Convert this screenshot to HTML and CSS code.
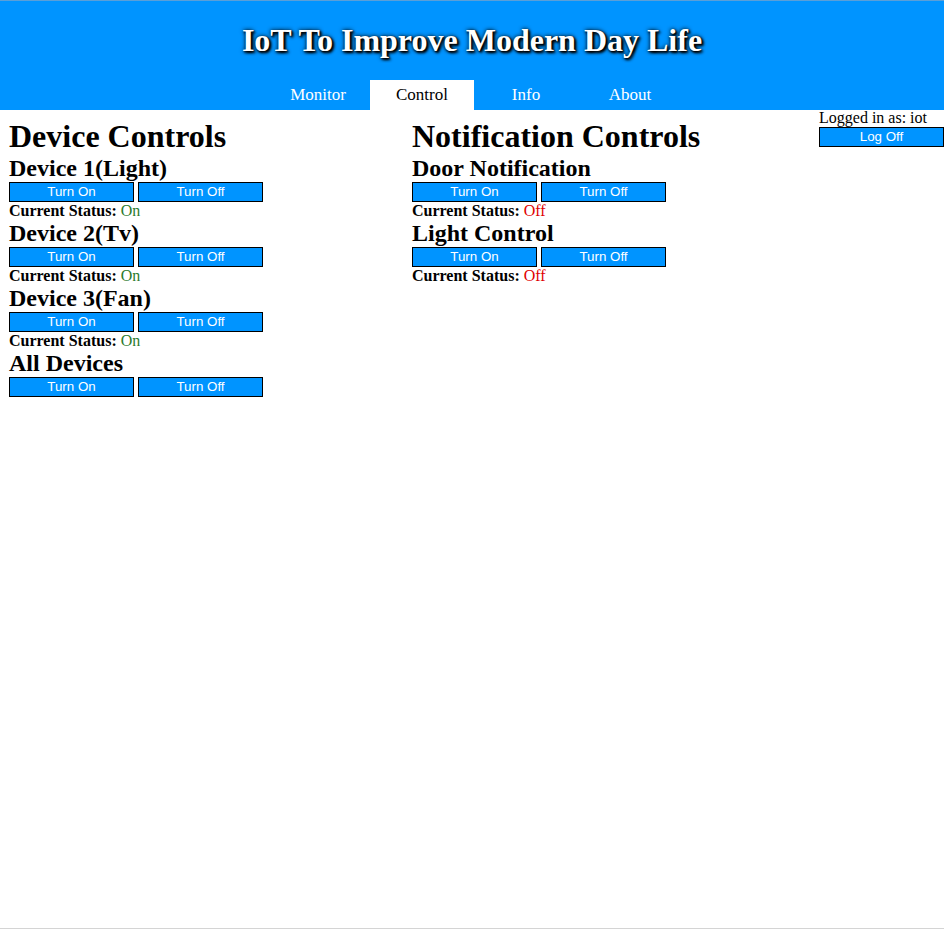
FILE: index.html
```html
<!DOCTYPE html>
<html>
<head>
<meta charset="utf-8">
<title>IoT Control</title>
<link rel="stylesheet" href="styles.css">
</head>
<body>
<header class="header">
  <h1 class="title">IoT To Improve Modern Day Life</h1>
  <nav class="nav">
    <a class="tab">Monitor</a>
    <a class="tab active">Control</a>
    <a class="tab">Info</a>
    <a class="tab">About</a>
  </nav>
</header>
<main class="main">
  <section class="col left">
    <h1 class="sec-title">Device Controls</h1>
    <h2 class="item">Device 1(Light)</h2>
    <div class="btns"><button class="btn">Turn On</button><button class="btn">Turn Off</button></div>
    <div class="status"><b>Current Status:</b> <span class="on">On</span></div>
    <h2 class="item">Device 2(Tv)</h2>
    <div class="btns"><button class="btn">Turn On</button><button class="btn">Turn Off</button></div>
    <div class="status"><b>Current Status:</b> <span class="on">On</span></div>
    <h2 class="item">Device 3(Fan)</h2>
    <div class="btns"><button class="btn">Turn On</button><button class="btn">Turn Off</button></div>
    <div class="status"><b>Current Status:</b> <span class="on">On</span></div>
    <h2 class="item">All Devices</h2>
    <div class="btns"><button class="btn">Turn On</button><button class="btn">Turn Off</button></div>
  </section>
  <section class="col right">
    <h1 class="sec-title">Notification Controls</h1>
    <h2 class="item">Door Notification</h2>
    <div class="btns"><button class="btn">Turn On</button><button class="btn">Turn Off</button></div>
    <div class="status"><b>Current Status:</b> <span class="off">Off</span></div>
    <h2 class="item">Light Control</h2>
    <div class="btns"><button class="btn">Turn On</button><button class="btn">Turn Off</button></div>
    <div class="status"><b>Current Status:</b> <span class="off">Off</span></div>
  </section>
  <aside class="login">
    <div class="login-text">Logged in as: iot</div>
    <button class="btn btn-logoff">Log Off</button>
  </aside>
</main>
</body>
</html>
```

FILE: styles.css
```css
html, body {
  margin: 0;
  padding: 0;
}
body {
  font-family: "Liberation Serif", "Times New Roman", serif;
  color: #000;
  background: #fff;
  min-height: 100vh;
  box-sizing: border-box;
  border-bottom: 1px solid #d4d4d4;
}
.header {
  background: #0094ff;
  border-top: 1px solid #5a9fd8;
  height: 110px;
  box-sizing: border-box;
  padding-top: 21px;
}
.title {
  margin: 0;
  text-align: center;
  color: #fff;
  font-size: 32px;
  line-height: 37px;
  font-weight: bold;
  text-shadow: 2px 2px 3px #000, 0 0 4px #000, 1px 1px 2px #000;
}
.nav {
  display: flex;
  justify-content: center;
  margin-top: 21px;
  padding-left: 4px;
}
.tab {
  width: 104px;
  height: 30px;
  line-height: 30px;
  text-align: center;
  font-size: 17px;
  color: #fff;
}
.tab.active {
  background: #fff;
  color: #000;
}
.main {
  display: flex;
  padding-left: 9px;
}
.col {
  padding-top: 8px;
}
.left {
  width: 403px;
}
.right {
  width: 407px;
}
.sec-title {
  margin: 0;
  font-size: 32px;
  line-height: 37px;
  font-weight: bold;
}
.item {
  margin: 0;
  font-size: 24px;
  line-height: 27px;
  font-weight: bold;
}
.btns {
  display: flex;
  gap: 4px;
}
.btn {
  width: 125px;
  height: 20px;
  margin: 0;
  padding: 0;
  box-sizing: border-box;
  background: #0094ff;
  border: 1px solid #000;
  color: #fff;
  font-family: "Liberation Sans", Arial, sans-serif;
  font-size: 13.33px;
  line-height: 18px;
  text-align: center;
}
.status {
  font-size: 16px;
  line-height: 18px;
}
.on {
  color: #2b7a2b;
}
.off {
  color: #e00000;
}
.login {
  width: 125px;
  font-size: 16px;
}
.login-text {
  line-height: 17px;
  margin-top: -1px;
}
.btn-logoff {
  display: block;
  margin-top: 1px;
}
```
